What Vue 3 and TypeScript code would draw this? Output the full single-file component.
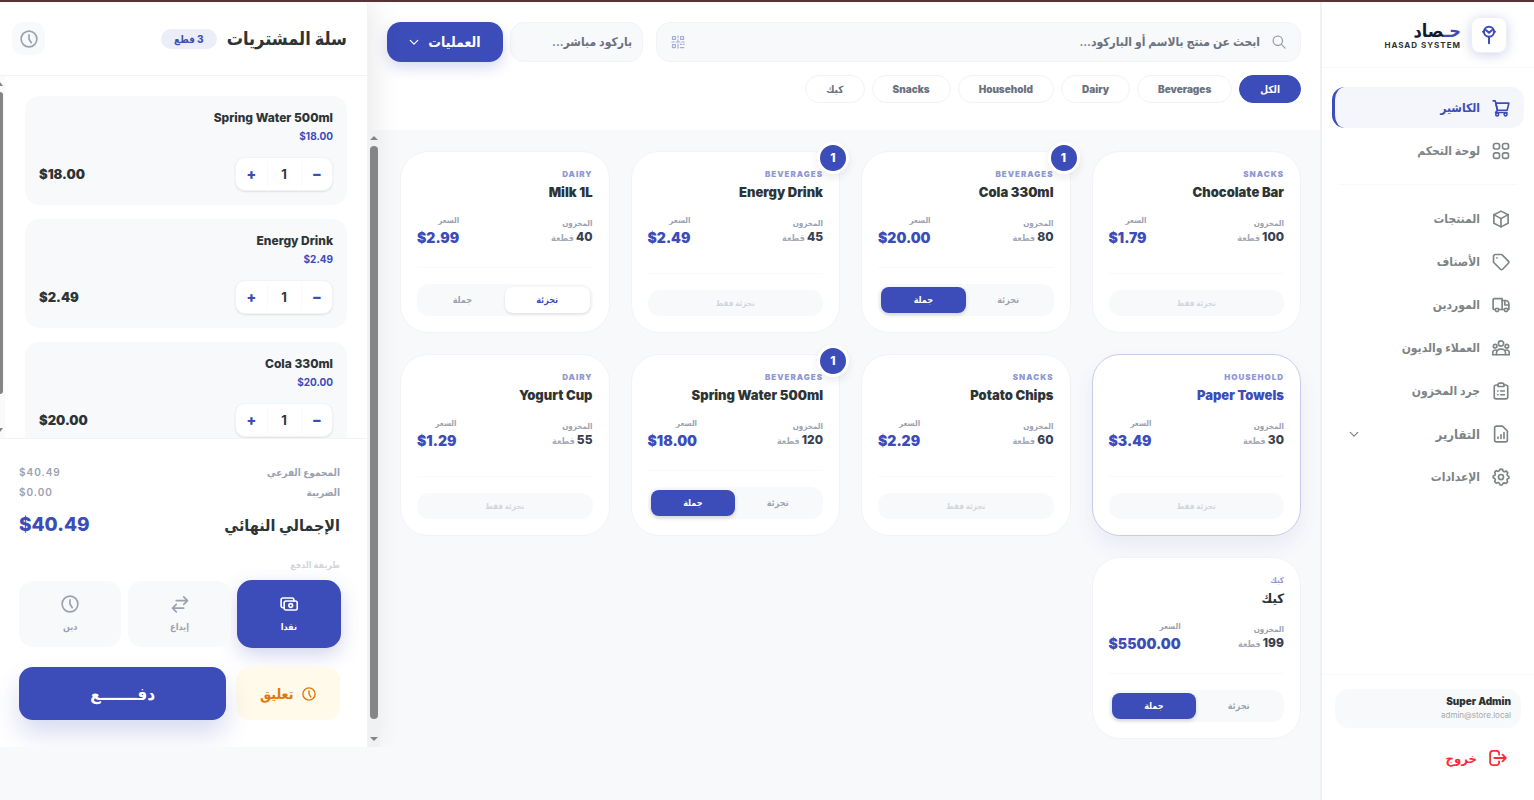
<script setup lang="ts">
import { computed, h, ref } from 'vue'

type Mode = 'retail' | 'wholesale' | null

interface Product {
  id: number
  category: string
  name: string
  stock: number
  price: string
  mode: Mode
  inCart?: number
  highlighted?: boolean
}

interface CartLine {
  name: string
  price: number
  qty: number
}

const icons: Record<string, string[]> = {
  logo: ['M6.500 8.400a5.500 5.500 0 1 0 11 0a5.500 5.500 0 1 0-11 0', 'M12 14v7', 'M8.500 6.500L12 9.500l3.500-3', 'M5.500 8.400h1M17.500 8.400h1'],
  cart: ['M1.500 2.500h2.800l.8 3M5.100 5.500h17.400l-2.300 9.500H7.200z', 'M5.100 5.500L7.200 15L4.800 18H20', 'M5 20.500a1.900 1.900 0 1 0 3.800 0a1.900 1.900 0 1 0-3.800 0', 'M16.200 20.500a1.900 1.900 0 1 0 3.800 0a1.900 1.900 0 1 0-3.800 0'],
  grid: ['M4.500 2h3A2.500 2.500 0 0 1 10 4.500v2.300a2.500 2.500 0 0 1-2.500 2.500h-3A2.500 2.500 0 0 1 2 6.800V4.500A2.500 2.500 0 0 1 4.500 2z', 'M16.500 2h3A2.500 2.500 0 0 1 22 4.500v2.300a2.500 2.500 0 0 1-2.500 2.500h-3A2.500 2.500 0 0 1 14 6.800V4.500A2.500 2.500 0 0 1 16.500 2z', 'M4.500 14.500h3A2.500 2.500 0 0 1 10 17v2.300a2.500 2.500 0 0 1-2.500 2.500h-3A2.500 2.500 0 0 1 2 19.300V17a2.500 2.500 0 0 1 2.500-2.500z', 'M16.500 14.500h3A2.500 2.500 0 0 1 22 17v2.300a2.500 2.500 0 0 1-2.500 2.500h-3a2.500 2.500 0 0 1-2.500-2.500V17a2.500 2.500 0 0 1 2.500-2.500z'],
  box: ['M12 1.500l9.500 4.700v11.600L12 22.500l-9.500-4.700V6.200z', 'M2.500 6.200L12 11.500l9.500-5.300', 'M12 11.500v11'],
  tag: ['M2 4.500A2.500 2.500 0 0 1 4.500 2H12a2 2 0 0 1 1.500.6l8.300 8.300a2 2 0 0 1 0 2.800l-7.600 8a2 2 0 0 1-2.900 0L2.600 13A2 2 0 0 1 2 11.500z', 'M6.500 6.500h.1'],
  truck: ['M4 18H3a1.500 1.500 0 0 1-1.500-1.500V5A1.500 1.500 0 0 1 3 3.500h10.500V18H9', 'M13.500 6H18a4.500 4.500 0 0 1 4.500 4.500V18h-1.500', 'M17 7v5h5.500', 'M4.500 18.500a2.200 2.200 0 1 0 4.400 0a2.200 2.200 0 1 0-4.400 0', 'M16.500 18.500a2.200 2.200 0 1 0 4.400 0a2.200 2.200 0 1 0-4.400 0', 'M13.500 18h3'],
  users: ['M8.500 6a3.500 3.500 0 1 0 7 0a3.500 3.500 0 1 0-7 0', 'M1.800 9.500a2.400 2.400 0 1 0 4.800 0a2.400 2.400 0 1 0-4.800 0', 'M17.400 9.500a2.400 2.400 0 1 0 4.800 0a2.400 2.400 0 1 0-4.800 0', 'M6 21v-2.500a5 5 0 0 1 5-5h2a5 5 0 0 1 5 5V21z', 'M6 21H1v-3a3.500 3.500 0 0 1 5-3', 'M18 21h5v-3a3.500 3.500 0 0 0-5-3'],
  clipboard: ['M8 4H5.500A2.500 2.500 0 0 0 3 6.500V20a2.500 2.500 0 0 0 2.500 2.500h13A2.500 2.500 0 0 0 21 20V6.500A2.500 2.500 0 0 0 18.500 4H16', 'M8 4a2.500 2.500 0 0 1 2.500-2.500h3A2.500 2.500 0 0 1 16 4v2H8z', 'M7.500 12h.5M11.500 12h5M7.500 17h.5M11.500 17h5'],
  report: ['M14 1.500H6A2.500 2.500 0 0 0 3.500 4v16A2.500 2.500 0 0 0 6 22.500h12a2.500 2.500 0 0 0 2.500-2.500V8z', 'M8 18v-2M12 18v-5M16 18v-8'],
  gear: ['M12 1.500l2 .3.900 2.600 1.400.7 2.700-.9 1.900 2-.9 2.700.6 1.300 2 1.300v2l-2.100 1.200-.6 1.400.9 2.600-2 2-2.600-.9-1.400.6-1.200 2.200h-2.800L9.600 20l-1.400-.6-2.600.9-2-2 .9-2.600-.6-1.400-2.300-1.300v-2.300L4 9.600l.5-1.400-.9-2.600 2-2 2.600.9 1.400-.7.900-2z', 'M8.600 12a3.400 3.400 0 1 0 6.800 0a3.400 3.400 0 1 0-6.800 0'],
  logout: ['M13.500 7.500V6A3.500 3.500 0 0 0 10 2.500H5A3.500 3.500 0 0 0 1.500 6v12A3.500 3.500 0 0 0 5 21.500h5a3.500 3.500 0 0 0 3.500-3.500v-1.500', 'M7 12h15.500M18 7.500l4.500 4.500L18 16.500'],
  chevron: ['M3 8l9 9l9-9'],
  search: ['M2 10a8 8 0 1 0 16 0a8 8 0 1 0-16 0', 'M16 16l6.500 6.500'],
  clock: ['M1.500 12a10.500 10.500 0 1 0 21 0a10.500 10.500 0 1 0-21 0', 'M12 6.500V12l3 5'],
  cash: ['M5 17H4a2.500 2.500 0 0 1-2.500-2.500v-8A2.500 2.500 0 0 1 4 4h12a2.500 2.500 0 0 1 2.500 2.500V8', 'M8 8h12.500a2.500 2.500 0 0 1 2.500 2.500v7a2.500 2.500 0 0 1-2.500 2.500H8a2.500 2.500 0 0 1-2.500-2.500v-7A2.500 2.500 0 0 1 8 8z', 'M11.800 14a2.500 2.500 0 1 0 5 0a2.500 2.500 0 1 0-5 0'],
  swap: ['M7 7.500h15M17 2.500l5 5l-5 5', 'M17 17.500H2M7 12.500l-5 5l5 5'],
  qr: ['M2.500 2.500h5v5h-5zM16.500 2.500h5v5h-5zM2.500 16.500h5v5h-5z', 'M12 1.500v3M12 8v3.500M1.500 12h4M8.500 12h7M18.500 12h4M12 15.500v7M16 16h2M21 16h1.500M16 21.500h6'],
}

const Icon = (props: { name: string }) =>
  h(
    'svg',
    { viewBox: '0 0 24 24', fill: 'none', stroke: 'currentColor', 'stroke-linecap': 'round', 'stroke-linejoin': 'round', 'aria-hidden': 'true' },
    icons[props.name].map((d) => h('path', { d })),
  )
Icon.props = ['name']

const mainNav = [
  { label: 'الكاشير', icon: 'cart' },
  { label: 'لوحة التحكم', icon: 'grid' },
]
const storeNav = [
  { label: 'المنتجات', icon: 'box' },
  { label: 'الأصناف', icon: 'tag' },
  { label: 'الموردين', icon: 'truck' },
  { label: 'العملاء والديون', icon: 'users' },
  { label: 'جرد المخزون', icon: 'clipboard' },
  { label: 'التقارير', icon: 'report', expandable: true },
  { label: 'الإعدادات', icon: 'gear' },
]

const categories = ['الكل', 'Beverages', 'Dairy', 'Household', 'Snacks', 'كيك']
const activeCategory = ref('الكل')
const search = ref('')
const barcode = ref('')

const products = ref<Product[]>([
  { id: 1, category: 'Snacks', name: 'Chocolate Bar', stock: 100, price: '$1.79', mode: null },
  { id: 2, category: 'Beverages', name: 'Cola 330ml', stock: 80, price: '$20.00', mode: 'wholesale', inCart: 1 },
  { id: 3, category: 'Beverages', name: 'Energy Drink', stock: 45, price: '$2.49', mode: null, inCart: 1 },
  { id: 4, category: 'Dairy', name: 'Milk 1L', stock: 40, price: '$2.99', mode: 'retail' },
  { id: 5, category: 'Household', name: 'Paper Towels', stock: 30, price: '$3.49', mode: null, highlighted: true },
  { id: 6, category: 'Snacks', name: 'Potato Chips', stock: 60, price: '$2.29', mode: null },
  { id: 7, category: 'Beverages', name: 'Spring Water 500ml', stock: 120, price: '$18.00', mode: 'wholesale', inCart: 1 },
  { id: 8, category: 'Dairy', name: 'Yogurt Cup', stock: 55, price: '$1.29', mode: null },
  { id: 9, category: 'كيك', name: 'كيك', stock: 199, price: '$5500.00', mode: 'wholesale' },
])

const shown = computed(() =>
  products.value.filter(
    (p) =>
      (activeCategory.value === 'الكل' || p.category === activeCategory.value) &&
      p.name.toLowerCase().includes(search.value.toLowerCase()),
  ),
)

const cart = ref<CartLine[]>([
  { name: 'Spring Water 500ml', price: 18, qty: 1 },
  { name: 'Energy Drink', price: 2.49, qty: 1 },
  { name: 'Cola 330ml', price: 20, qty: 1 },
])
const money = (n: number) => '$' + n.toFixed(2)
const subtotal = computed(() => cart.value.reduce((sum, l) => sum + l.price * l.qty, 0))
const pieces = computed(() => cart.value.reduce((sum, l) => sum + l.qty, 0))

const methods = [
  { label: 'نقدا', icon: 'cash' },
  { label: 'إيداع', icon: 'swap' },
  { label: 'دين', icon: 'clock' },
]
const method = ref('نقدا')
</script>

<template>
  <div class="app" dir="rtl">
    <aside class="sidebar">
      <header class="brand">
        <span class="brand-mark"><Icon name="logo" class="brand-icon" /></span>
        <div class="brand-text">
          <h1><span class="accent">حـ</span>صاد</h1>
          <p dir="ltr">HASAD SYSTEM</p>
        </div>
      </header>
      <nav class="nav">
        <a v-for="(item, i) in mainNav" :key="item.label" href="#" class="nav-item" :class="{ active: i === 0 }">
          <Icon :name="item.icon" class="nav-icon" />
          <span>{{ item.label }}</span>
        </a>
        <hr />
        <a v-for="item in storeNav" :key="item.label" href="#" class="nav-item" :class="{ strong: item.expandable }">
          <Icon :name="item.icon" class="nav-icon" />
          <span>{{ item.label }}</span>
          <Icon v-if="item.expandable" name="chevron" class="nav-chevron" />
        </a>
      </nav>
      <footer class="account">
        <div class="user">
          <strong>Super Admin</strong>
          <span>admin@store.local</span>
        </div>
        <button type="button" class="logout"><Icon name="logout" class="logout-icon" />خروج</button>
      </footer>
    </aside>

    <main class="catalog">
      <header class="toolbar">
        <div class="tools">
          <div class="search">
            <Icon name="search" class="search-icon" />
            <input v-model="search" type="text" aria-label="بحث" placeholder="ابحث عن منتج بالاسم أو الباركود..." />
            <Icon name="qr" class="qr-icon" />
          </div>
          <div class="quick">
            <input v-model="barcode" type="text" class="barcode" aria-label="باركود" placeholder="باركود مباشر..." />
            <button type="button" class="operations">العمليات<Icon name="chevron" class="op-chevron" /></button>
          </div>
        </div>
        <div class="chips">
          <button
            v-for="c in categories"
            :key="c"
            type="button"
            class="chip"
            :class="{ active: c === activeCategory }"
            @click="activeCategory = c"
          >{{ c }}</button>
        </div>
      </header>

      <div class="catalog-body">
        <section class="products">
          <article v-for="p in shown" :key="p.id" class="product" :class="{ highlighted: p.highlighted }">
            <span v-if="p.inCart" class="count">{{ p.inCart }}</span>
            <p class="category">{{ p.category }}</p>
            <h3>{{ p.name }}</h3>
            <div class="figures">
              <div class="stock">
                <span class="caption">المخزون</span>
                <p><b>{{ p.stock }}</b> قطعة</p>
              </div>
              <div class="price">
                <span class="caption">السعر</span>
                <strong>{{ p.price }}</strong>
              </div>
            </div>
            <div class="selling">
              <div v-if="p.mode" class="modes">
                <button type="button" :class="{ retail: p.mode === 'retail' }" @click="p.mode = 'retail'">تجزئة</button>
                <button type="button" :class="{ wholesale: p.mode === 'wholesale' }" @click="p.mode = 'wholesale'">جملة</button>
              </div>
              <p v-else class="retail-only">تجزئة فقط</p>
            </div>
          </article>
        </section>
        <div class="scrollbar" aria-hidden="true">
          <i class="up"></i><i class="thumb"></i><i class="down"></i>
        </div>
      </div>
    </main>

    <aside class="cart">
      <header class="cart-head">
        <h2>سلة المشتريات</h2>
        <span class="pieces">{{ pieces }} قطع</span>
        <button type="button" class="history" aria-label="السجل"><Icon name="clock" class="history-icon" /></button>
      </header>
      <div class="cart-body">
        <ul class="lines">
          <li v-for="line in cart" :key="line.name" class="line">
            <h4>{{ line.name }}</h4>
            <p class="unit">{{ money(line.price) }}</p>
            <div class="line-foot">
              <div class="stepper">
                <button type="button" aria-label="إنقاص" @click="line.qty = Math.max(1, line.qty - 1)">−</button>
                <span>{{ line.qty }}</span>
                <button type="button" aria-label="زيادة" @click="line.qty++">+</button>
              </div>
              <strong>{{ money(line.price * line.qty) }}</strong>
            </div>
          </li>
        </ul>
        <div class="scrollbar slim" aria-hidden="true">
          <i class="up"></i><i class="thumb"></i><i class="down"></i>
        </div>
      </div>
      <footer class="checkout">
        <p class="sum"><span>المجموع الفرعي</span><b>{{ money(subtotal) }}</b></p>
        <p class="sum"><span>الضريبة</span><b>$0.00</b></p>
        <p class="total"><span>الإجمالي النهائي</span><b>{{ money(subtotal) }}</b></p>
        <p class="method-label">طريقة الدفع</p>
        <div class="methods">
          <button
            v-for="m in methods"
            :key="m.label"
            type="button"
            :class="{ active: m.label === method }"
            @click="method = m.label"
          ><Icon :name="m.icon" class="method-icon" />{{ m.label }}</button>
        </div>
        <div class="actions">
          <button type="button" class="hold"><Icon name="clock" class="hold-icon" />تعليق</button>
          <button type="button" class="pay">دفـــــــع</button>
        </div>
      </footer>
    </aside>
  </div>
</template>

<style>
body {
  margin: 0;
  background: #f8f9fb;
}
</style>

<style scoped>
* {
  box-sizing: border-box;
  margin: 0;
}
.app {
  display: flex;
  height: 100vh;
  overflow: hidden;
  border-top: 2px solid #573338;
  background: #f8f9fb;
  color: #2d3436;
  font-family: Inter, 'DejaVu Sans Condensed', 'DejaVu Sans', sans-serif;
  font-size: 12px;
  line-height: 16px;
}
button,
input {
  font: inherit;
  border: 0;
}
button {
  padding: 0;
  cursor: pointer;
}
svg {
  flex: none;
}

/* Sidebar */
.sidebar {
  display: flex;
  flex: none;
  flex-direction: column;
  width: 214px;
  border-left: 2px solid #f0f0f2;
  background: #fff;
}
.brand {
  display: flex;
  flex: none;
  align-items: center;
  gap: 10px;
  height: 66px;
  padding: 0 27px;
  border-bottom: 1px solid #f8f9fb;
}
.brand-mark {
  display: grid;
  place-items: center;
  width: 36px;
  height: 36px;
  border: 1px solid #eeeff6;
  border-radius: 9px;
  box-shadow: 0 2px 12px rgba(60, 76, 184, 0.25);
  color: #3c4cb8;
}
.brand-icon {
  width: 22px;
  height: 22px;
  stroke-width: 2.2;
}
h1 {
  color: #131a2e;
  font-size: 18px;
  font-weight: 900;
  line-height: 20px;
}
.accent {
  color: #3c4cb8;
}
.brand-text p {
  font-size: 8px;
  font-weight: 700;
  line-height: 8px;
  letter-spacing: 1px;
}
.nav {
  display: flex;
  flex: 1;
  flex-direction: column;
  gap: 2px;
  padding: 19px 10px;
}
.nav hr {
  width: 178px;
  margin: 11px auto;
  border: 0;
  border-top: 1px solid #f8f9fb;
}
.nav-item {
  display: flex;
  align-items: center;
  gap: 12px;
  height: 41px;
  padding: 0 14px;
  border-left: 3px solid transparent;
  border-radius: 13px;
  color: #7d8486;
  font-weight: 700;
  text-decoration: none;
}
.nav-item.active {
  border-color: #3c4cb8;
  background: #f5f6fb;
  color: #3c4cb8;
}
.nav-item.strong {
  font-size: 13px;
}
.nav-icon {
  width: 18px;
  height: 18px;
  stroke-width: 2.2;
}
.nav-chevron {
  width: 10px;
  height: 10px;
  margin-inline-start: auto;
  stroke-width: 3;
}
.account {
  padding: 14px 13px 32px;
  border-top: 1px solid #f8f9fb;
}
.user {
  display: flex;
  flex-direction: column;
  height: 39px;
  padding: 5px 10px;
  border-radius: 14px;
  background: #f8f9fb;
}
.user strong {
  font-size: 10px;
  font-weight: 900;
  line-height: 15px;
}
.user span {
  color: #a4a9ae;
  font-size: 8px;
  line-height: 12px;
}
.logout {
  display: flex;
  align-items: center;
  gap: 12px;
  margin-top: 20px;
  padding: 0 14px;
  background: none;
  color: #fb2c3a;
  font-size: 13px;
  font-weight: 700;
  line-height: 20px;
}
.logout-icon {
  width: 18px;
  height: 18px;
  stroke-width: 2.4;
}

/* Catalog */
.catalog {
  display: flex;
  flex: 1;
  flex-direction: column;
  min-width: 0;
}
.toolbar {
  flex: none;
  height: 128px;
  padding: 20px 19px 0;
  background: #fff;
}
.tools {
  display: flex;
  gap: 13px;
  height: 40px;
}
.search {
  display: flex;
  flex: 1;
  align-items: center;
  gap: 12px;
  min-width: 0;
  padding: 0 14px;
  border: 1px solid #f2f3f6;
  border-radius: 14px;
  background: #f8f9fb;
}
.search input {
  flex: 1;
  min-width: 0;
  padding: 0;
  background: none;
  font-weight: 600;
}
input::placeholder {
  color: #6b7280;
  opacity: 1;
}
.search-icon {
  width: 14px;
  height: 14px;
  color: #9aa1af;
  stroke-width: 2.2;
}
.qr-icon {
  width: 14px;
  height: 14px;
  color: #a5abe0;
  stroke-width: 2;
}
.quick {
  display: flex;
  gap: 7px;
}
.barcode {
  width: 133px;
  padding: 0 10px;
  border: 1px solid #f2f3f6;
  border-radius: 14px;
  background: #f8f9fb;
  font-weight: 600;
}
.operations {
  display: flex;
  align-items: center;
  justify-content: center;
  gap: 9px;
  width: 116px;
  border-radius: 14px;
  background: #3c4cb8;
  box-shadow: 0 6px 14px rgba(60, 76, 184, 0.2);
  color: #fff;
  font-size: 14px;
  font-weight: 800;
}
.op-chevron {
  width: 10px;
  height: 10px;
  stroke-width: 3;
}
.chips {
  display: flex;
  gap: 7px;
  margin-top: 13px;
}
.chip {
  height: 28px;
  padding: 0 20px;
  border: 1px solid #f2f3f6;
  border-radius: 14px;
  background: #fff;
  color: #6b7280;
  font-size: 10px;
  font-weight: 900;
}
.chip.active {
  border-color: #3c4cb8;
  background: #3c4cb8;
  color: #fff;
}
.catalog-body {
  display: flex;
  flex: 1;
  min-height: 0;
  margin-bottom: 53px;
}
.products {
  display: grid;
  flex: 1;
  grid-template-columns: repeat(4, minmax(0, 1fr));
  grid-auto-rows: 182px;
  gap: 21px;
  padding: 21px 19px 0 20px;
}
.product {
  position: relative;
  display: flex;
  flex-direction: column;
  padding: 16px;
  border: 1px solid #f2f3f6;
  border-radius: 28px;
  background: #fff;
}
.product.highlighted {
  border-color: #c8ccec;
  box-shadow: 0 10px 20px rgba(60, 76, 184, 0.08);
}
.highlighted h3 {
  color: #3c4cb8;
}
.count {
  position: absolute;
  top: -10px;
  right: -10px;
  display: grid;
  place-items: center;
  width: 32px;
  height: 32px;
  border: 3px solid #fff;
  border-radius: 50%;
  background: #3c4cb8;
  box-shadow: 0 4px 10px rgba(0, 0, 0, 0.08);
  color: #fff;
  font-weight: 800;
}
.category {
  color: #8f98d6;
  font-size: 8px;
  font-weight: 900;
  line-height: 12px;
  letter-spacing: 1px;
  text-transform: uppercase;
}
h3 {
  margin-top: 3px;
  font-size: 13px;
  font-weight: 900;
  line-height: 18px;
  white-space: nowrap;
}
.figures {
  display: flex;
  align-items: flex-end;
  justify-content: space-between;
  margin-top: 13px;
}
.caption {
  display: block;
  color: #9aa1af;
  font-size: 8px;
  font-weight: 700;
  line-height: 12px;
}
.stock p {
  color: #a4aab6;
  font-size: 9px;
  font-weight: 700;
  line-height: 16px;
}
.stock b {
  color: #374151;
  font-size: 12px;
  font-weight: 800;
}
.price strong {
  display: block;
  margin-top: 4px;
  color: #3c4cb8;
  font-size: 14px;
  font-weight: 900;
  line-height: 16px;
}
.selling {
  margin-top: auto;
  padding-top: 16px;
  border-top: 1px solid #f8f9fb;
}
.modes {
  display: flex;
  height: 32px;
  padding: 3px;
  border-radius: 12px;
  background: #f8f9fb;
}
.modes button {
  flex: 1;
  border-radius: 8px;
  background: none;
  color: #9aa1af;
  font-size: 9px;
  font-weight: 800;
}
.modes .wholesale {
  background: #3c4cb8;
  box-shadow: 0 2px 4px rgba(0, 0, 0, 0.15);
  color: #fff;
}
.modes .retail {
  background: #fff;
  box-shadow: 0 1px 3px rgba(0, 0, 0, 0.12);
  color: #3c4cb8;
}
.retail-only {
  border-radius: 12px;
  background: #f8f9fb;
  color: #d1d5db;
  font-size: 8px;
  font-weight: 800;
  line-height: 26px;
  text-align: center;
}

/* Scrollbars */
.scrollbar {
  position: relative;
  z-index: 2;
  display: flex;
  flex: none;
  flex-direction: column;
  align-items: center;
  gap: 6px;
  width: 12px;
  padding: 6px 0;
  background: #f0f1f3;
}
.scrollbar i {
  display: block;
}
.up {
  border: 4px solid transparent;
  border-top: 0;
  border-bottom-color: #858585;
}
.down {
  margin-top: 12px;
  border: 4px solid transparent;
  border-bottom: 0;
  border-top-color: #858585;
}
.thumb {
  flex: 1;
  width: 8px;
  border-radius: 4px;
  background: #858585;
}

/* Cart */
.cart {
  position: relative;
  z-index: 1;
  display: flex;
  flex: none;
  flex-direction: column;
  width: 368px;
  margin-bottom: 53px;
  border-right: 1px solid #f2f3f6;
  background: #fff;
  box-shadow: 0 0 34px rgba(0, 0, 0, 0.12);
  clip-path: inset(0 -40px 0 0);
}
.cart-head {
  display: flex;
  flex: none;
  align-items: center;
  gap: 10px;
  height: 74px;
  padding: 0 20px 0 12px;
  border-bottom: 1px solid #f2f3f6;
}
h2 {
  font-size: 18px;
  font-weight: 800;
  line-height: 26px;
}
.pieces {
  padding: 0 13px;
  border-radius: 10px;
  background: #ebedf8;
  color: #3c4cb8;
  font-size: 10px;
  font-weight: 800;
  line-height: 20px;
}
.history {
  display: grid;
  place-items: center;
  width: 33px;
  height: 33px;
  margin-inline-start: auto;
  border-radius: 11px;
  background: #f8f9fb;
  color: #9aa1af;
}
.history-icon {
  width: 18px;
  height: 18px;
  stroke-width: 2.2;
}
.cart-body {
  display: flex;
  flex: 1;
  min-height: 0;
}
.lines {
  display: flex;
  flex: 1;
  flex-direction: column;
  gap: 14px;
  overflow: hidden;
  padding: 20px;
  list-style: none;
}
.line {
  flex: none;
  height: 109px;
  padding: 14px;
  border-radius: 14px;
  background: #f8f9fb;
}
h4 {
  font-size: 12px;
  font-weight: 800;
  line-height: 16px;
}
.unit {
  margin-top: 2px;
  color: #3c4cb8;
  font-size: 10px;
  font-weight: 700;
  line-height: 16px;
}
.line-foot {
  display: flex;
  align-items: center;
  justify-content: space-between;
  margin-top: 13px;
}
.line-foot strong {
  font-size: 13px;
  font-weight: 900;
}
.stepper {
  display: flex;
  align-items: center;
  width: 98px;
  height: 34px;
  border: 1px solid #f2f3f6;
  border-radius: 10px;
  background: #fff;
  box-shadow: 0 1px 2px rgba(0, 0, 0, 0.1);
}
.stepper button {
  flex: 1;
  background: none;
  color: #3c4cb8;
  font-size: 14px;
  font-weight: 900;
}
.stepper span {
  width: 35px;
  border: solid #f8f9fb;
  border-width: 0 1px;
  font-size: 13px;
  font-weight: 700;
  line-height: 26px;
  text-align: center;
}
.slim {
  width: 5px;
  background: #fafafa;
}
.slim .thumb {
  align-self: flex-end;
  width: 3px;
  border-radius: 0 3px 3px 0;
}
.slim .up,
.slim .down {
  align-self: flex-end;
  border-left-width: 0;
  border-right-width: 3px;
}
.slim .down {
  margin-top: 28px;
}
.checkout {
  flex: none;
  padding: 23px 27px 27px 19px;
  border-top: 1px solid #f2f3f6;
}
.sum {
  display: flex;
  justify-content: space-between;
  color: #9aa1af;
  font-size: 10px;
  font-weight: 700;
  line-height: 20px;
}
.sum b {
  font-weight: 600;
  letter-spacing: 1px;
}
.total {
  display: flex;
  align-items: center;
  justify-content: space-between;
  margin-top: 7px;
  font-size: 16px;
  font-weight: 800;
  line-height: 32px;
}
.total b {
  color: #3c4cb8;
  font-size: 19px;
  font-weight: 800;
}
.method-label {
  margin-top: 16px;
  color: #d1d5db;
  font-size: 9px;
  font-weight: 800;
  line-height: 16px;
}
.methods {
  display: flex;
  gap: 7px;
  margin-top: 8px;
}
.methods button {
  display: flex;
  flex: 1;
  flex-direction: column;
  align-items: center;
  gap: 6px;
  height: 66px;
  padding-top: 14px;
  border-radius: 14px;
  background: #f8f9fb;
  color: #9aa1af;
  font-size: 9px;
  font-weight: 800;
}
.methods .active {
  background: #3c4cb8;
  box-shadow: 0 0 0 1px #3c4cb8, 0 7px 20px rgba(60, 76, 184, 0.25);
  color: #fff;
}
.method-icon {
  width: 18px;
  height: 18px;
  stroke-width: 2.2;
}
.actions {
  display: grid;
  grid-template-columns: 1fr 2fr;
  gap: 10px;
  height: 53px;
  margin-top: 20px;
}
.actions button {
  border-radius: 14px;
}
.hold {
  display: flex;
  align-items: center;
  justify-content: center;
  gap: 9px;
  background: #fffaea;
  color: #e17808;
  font-size: 14px;
  font-weight: 800;
}
.hold-icon {
  width: 14px;
  height: 14px;
  stroke-width: 2.4;
}
.pay {
  background: #3c4cb8;
  box-shadow: 0 14px 26px rgba(60, 76, 184, 0.2);
  color: #fff;
  font-size: 17px;
  font-weight: 900;
}
</style>
